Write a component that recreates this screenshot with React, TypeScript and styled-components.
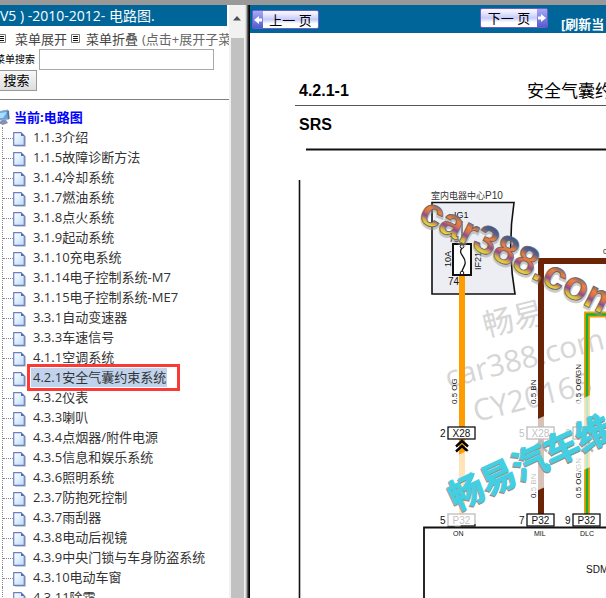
import React from "react";
import styled, { createGlobalStyle } from "styled-components";

const GlobalStyle = createGlobalStyle`
  * { box-sizing: border-box; }
  body { margin: 0; background: #fff; overflow: hidden; }
  button, input { font-family: inherit; }
`;

const ui = `"Open Sans", "Noto Sans CJK SC", sans-serif`;
const sim = `"Liberation Sans", "Noto Sans CJK SC", sans-serif`;

const Page = styled.div`
  display: flex;
  height: 100vh;
  overflow: hidden;
  border-top: 5px solid #999;
  font: 13px/20px ${ui};
  color: #333;
`;

const Sidebar = styled.aside`
  flex: 0 0 229px;
  overflow: hidden;
  white-space: nowrap;
`;

const SideTitle = styled.h1`
  margin: 0 2px 0 0;
  height: 21px;
  background: #069;
  color: #fff;
  font-size: 14px;
  font-weight: 400;
  line-height: 22px;
`;

const Tools = styled.div`
  display: flex;
  align-items: center;
  height: 23px;
  margin: 1px 0 0 -3px;
  color: #666;
`;

const ToolLink = styled.a`
  display: flex;
  align-items: center;
  gap: 9px;
  margin-right: 4px;
  color: #444;
  text-decoration: none;

  & + & { gap: 6px; }
`;

const SearchForm = styled.form`
  margin: 0;
  padding-bottom: 8px;
  border-bottom: 1px solid #808080;
`;

const SearchRow = styled.div`
  display: flex;
  align-items: center;
  gap: 4px;
  margin: -1px 0 0 -5px;
`;

const SearchLabel = styled.label`
  color: #000;
  font: 10px/20px ${sim};
`;

const SearchInput = styled.input`
  width: 175px;
  height: 21px;
  padding: 1px;
  border: 1px solid #a9a9a9;
`;

const SearchButton = styled.button`
  display: block;
  width: 42px;
  height: 21px;
  margin-left: -5px;
  padding: 0 0 1px 1px;
  border: 1px solid #999;
  background: linear-gradient(#f8f8f8, #ddd);
  color: #000;
  font-size: 13px;
  line-height: 18px;
`;

const TreeRoot = styled.a`
  display: flex;
  align-items: center;
  gap: 4px;
  height: 20px;
  margin: 7px 0 0 -6px;
  color: #00f;
  font-weight: 700;
  text-decoration: none;
`;

const Tree = styled.ul`
  margin: 0;
  padding: 0 0 0 2px;
  list-style: none;
`;

const Node = styled.li`
  display: flex;
  height: 20px;
  align-items: center;
  border-left: 1px dotted #888;
`;

const Branch = styled.span`
  width: 10px;
  height: 3px;
  border-bottom: 1px dotted #888;
`;

const NodeLink = styled.a<{ $selected?: boolean }>`
  position: relative;
  margin-left: 5px;
  padding: 0 1px 0 2px;
  line-height: 19px;
  color: #333;
  text-decoration: none;
  background: ${(p) => (p.$selected ? "#c0d2ec" : "transparent")};
`;

const Highlight = styled.span`
  position: absolute;
  inset: -4px -13px -4px -4px;
  border: 3px solid #fb3a36;
`;

const Scroll = styled.div`
  flex: 0 0 16px;
  display: flex;
  flex-direction: column;
  align-items: center;
  background: #f1f1f1;
`;

const ScrollUp = styled.button`
  width: 16px;
  height: 33px;
  padding: 6px 0 0 4px;
  border: 0;
  background: none;
  line-height: 0;
  text-align: left;
`;

const ScrollArrow = styled.svg`
  display: block;
  margin-bottom: 12px;
`;

const Thumb = styled.div`
  flex: 1;
  width: 13px;
  background: #c1c1c1;
`;

const Divider = styled.div`
  flex: 0 0 5px;
  background: linear-gradient(90deg, #ddd 1px, #777 2px, #444 3px, #000 4px);
`;

const Main = styled.main`
  flex: 1;
  min-width: 0;
  display: flex;
  flex-direction: column;
  overflow: hidden;
`;

const Bar = styled.nav`
  flex: 0 0 28px;
  display: flex;
  align-items: flex-start;
  overflow: hidden;
  background: #069;
  white-space: nowrap;
`;

const PageButton = styled.button<{ $next?: boolean }>`
  display: flex;
  flex: none;
  flex-direction: ${(p) => (p.$next ? "row-reverse" : "row")};
  align-items: stretch;
  width: ${(p) => (p.$next ? "68px" : "67px")};
  height: ${(p) => (p.$next ? "20px" : "19px")};
  margin: ${(p) => (p.$next ? "3px 0 0 161px" : "5px 0 0 2px")};
  padding: 0;
  border: 1px solid #6a60c8;
  border-radius: 2px;
  background: linear-gradient(#f4f4ff 10%, #c6cafa 50%, #fff 75%);
  color: #000;
  font: 13px/19px ${sim};
`;

const ButtonText = styled.span`
  flex: 1;
  text-align: center;
`;

const ArrowTile = styled.span`
  width: 10px;
  display: flex;
  align-items: center;
  background: linear-gradient(#a5abf2, #545bd0);
`;

const Refresh = styled.a`
  margin: 9px 0 0 13px;
  color: #fff;
  font-size: 13px;
  font-weight: 700;
  text-decoration: none;
`;

const DocHead = styled.header`
  display: flex;
  justify-content: space-between;
  align-items: flex-end;
  margin: 45px 0 0 45px;
  padding: 0 0 1px 4px;
  border-bottom: 1px solid #555;
  white-space: nowrap;
  overflow: hidden;
  color: #000;
  font: 700 16px/26px ${sim};
`;

const DocTitle = styled.span`
  margin-right: -6px;
  padding-top: 2px;
  font-size: 17px;
  font-weight: 400;
  line-height: 24px;
`;

const Section = styled.h2`
  margin: 6px 0 0 49px;
  color: #000;
  font: 700 16px/26px ${sim};
`;

const Canvas = styled.svg`
  display: block;
  flex: 1;
  width: 100%;
  min-height: 0;
  margin-top: 3px;
  font-family: ${sim};
`;

const items = [
  "1.1.3介绍", "1.1.5故障诊断方法", "3.1.4冷却系统", "3.1.7燃油系统", "3.1.8点火系统",
  "3.1.9起动系统", "3.1.10充电系统", "3.1.14电子控制系统-M7", "3.1.15电子控制系统-ME7",
  "3.3.1自动变速器", "3.3.3车速信号", "4.1.1空调系统", "4.2.1安全气囊约束系统", "4.3.2仪表",
  "4.3.3喇叭", "4.3.4点烟器/附件电源", "4.3.5信息和娱乐系统", "4.3.6照明系统", "2.3.7防抱死控制",
  "4.3.7雨刮器", "4.3.8电动后视镜", "4.3.9中央门锁与车身防盗系统", "4.3.10电动车窗", "4.3.11除霜",
];
const selected = "4.2.1安全气囊约束系统";

const Sheet = styled.svg`
  flex: none;
  margin-top: 3px;
`;

const FileIcon = () => (
  <Sheet width="13" height="16" viewBox="0 0 13 16">
    <path d="M2 15.3H12.5V5" fill="none" stroke="#c4c4c8" />
    <path d="M.7 1.7H8L11.3 5V14.3H.7Z" fill="url(#paper)" stroke="#6a80bd" strokeWidth="1.2" />
    <path d="M8 1.5V5H11.500Z" fill="#506dba" />
    <defs>
      <linearGradient id="paper" x2="1" y2="1">
        <stop stopColor="#fff" />
        <stop offset="1" stopColor="#bcdcff" />
      </linearGradient>
    </defs>
  </Sheet>
);

const ComputerIcon = () => (
  <svg width="16" height="17" viewBox="0 0 16 17">
    <path d="M3 3 14 1 15 10 5 11Z" fill="#5aa9ee" stroke="#93a3bd" />
    <path d="M5 4 13 3 9 9H5Z" fill="#a9defd" />
    <path d="M8 11H12L14 14 9 16 4 14Z" fill="#8890ac" />
    <path d="M13 2 15 2 15.5 10 14 10Z" fill="#666e91" />
  </svg>
);

const MenuIcon = () => (
  <svg width="9" height="9" viewBox="0 0 9 9">
    <path d="M.5.5H8.5V8.5H.5Z" fill="#fff" stroke="#777" />
    <path d="M2 2.5H7M2 4.5H7M2 6.5H7" stroke="#111" />
  </svg>
);

const Arrow = ({ next }: { next?: boolean }) => (
  <ArrowTile>
    <svg width="10" height="10" viewBox="0 0 10 10">
      <path d={next ? "M1 3.5H4V1L9 5 4 9V6.500H1Z" : "M9 3.5H6V1L1 5 6 9V6.500H9Z"} fill="#fff" />
    </svg>
  </ArrowTile>
);

const Pin = ({ x, y, n, label }: { x: number; y: number; n: string; label: string }) => (
  <g>
    <rect x={x} y={y} width="27" height="12" fill="#fff" stroke="#111" strokeWidth="1.3" />
    <text x={x + 13.5} y={y + 9.7} fontSize="10" textAnchor="middle">{label}</text>
    <text x={x - 8} y={y + 10} fontSize="10">{n}</text>
  </g>
);

const WireLabel = ({ x, y, children, size = 8 }: { x: number; y: number; children: string; size?: number }) => (
  <text transform={`translate(${x} ${y}) rotate(-90)`} fontSize={size}>{children}</text>
);

const Chevron = ({ x }: { x: number }) => (
  <path d={`M${x - 6} 446.5 ${x} 441 ${x + 6} 446.5M${x - 6} 451.5 ${x} 446 ${x + 6} 451.5`} fill="none" stroke="#000" strokeWidth="2.4" />
);

const Diagram = () => (
  <Canvas role="img" aria-label="SRS">
    <defs>
      <linearGradient id="rainbow" gradientUnits="userSpaceOnUse" x1="0" y1="-29" x2="0" y2="1">
        <stop stopColor="#34549a" />
        <stop offset=".2" stopColor="#5a5f86" />
        <stop offset=".4" stopColor="#f0803c" />
        <stop offset=".56" stopColor="#d9704c" />
        <stop offset=".7" stopColor="#8b4a98" />
        <stop offset=".84" stopColor="#d9b040" />
        <stop offset="1" stopColor="#f4ec3c" />
      </linearGradient>
    </defs>
    <g transform="translate(-250 -141)" fill="#111">
      <path d="M306 149.500H3000" stroke="#111" strokeWidth="2" />
      <path d="M299.500 180V3000" stroke="#111" strokeWidth="1.600" />
      <text x="431" y="198.500" fontSize="9" fill="#333">室内电器中心<tspan fontSize="10">P10</tspan></text>
      <path d="M432 202.500H514Q507 248 515 294H432Z" fill="#edeef4" stroke="#111" strokeWidth="1.600" />

      <g fill="#d6d6d6" fontFamily={ui}>
        <text transform="translate(486 337) rotate(-14)" fontSize="31">畅易</text>
        <text transform="translate(448 388) rotate(-14)" fontSize="30">car388.com</text>
        <text transform="translate(476 422) rotate(-14)" fontSize="30">CY20165</text>
      </g>

      <path d="M462 276V520" stroke="#ff9d00" strokeWidth="6" />
      <path d="M541 520V261H3000" fill="none" stroke="#6b2506" strokeWidth="6" />
      <path d="M587 520V314.500H3000" fill="none" stroke="#ff9a00" strokeWidth="6" />
      <path d="M587 520V314.500H3000" fill="none" stroke="#0cb43c" strokeWidth="2.600" />

      <text x="454" y="218" fontSize="9">IG1</text>
      <text x="449" y="242" fontSize="9">75</text>
      <path d="M462 221V246" stroke="#222" />
      <rect x="453" y="244" width="18" height="31" fill="#fff" stroke="#111" strokeWidth="2" />
      <path d="M462 248C457 254 467 257 465 264 464 268 462 269 462 272" fill="none" stroke="#111" strokeWidth="1.300" />
      <circle cx="462" cy="246.500" r="1.800" fill="#fff" stroke="#111" />
      <circle cx="462" cy="273" r="1.800" fill="#fff" stroke="#111" />
      <WireLabel x={451} y={267} size={9}>10A</WireLabel>
      <WireLabel x={481} y={270} size={9}>IF21</WireLabel>
      <text x="448" y="285" fontSize="10">74</text>

      <Pin x={448} y={427} n="2" label="X28" />
      <Pin x={527} y={427} n="5" label="X28" />
      <Pin x={573} y={427} n="6" label="X28" />
      <Chevron x={462} />
      <Chevron x={541} />
      <Chevron x={587} />
      <Pin x={448} y={514} n="5" label="P32" />
      <Pin x={527} y={514} n="7" label="P32" />
      <Pin x={573} y={514} n="9" label="P32" />
      <WireLabel x={457} y={404}>0.5 OG</WireLabel>
      <WireLabel x={536} y={404}>0.5 BN</WireLabel>
      <WireLabel x={581} y={404}>0.5 OG/GN</WireLabel>
      <WireLabel x={536} y={498}>0.5 BN</WireLabel>
      <WireLabel x={581} y={498}>0.5 OG/GN</WireLabel>
      <text x="603" y="254" fontSize="8">0</text>

      <path d="M447 460 606 388V460L570 476 534 492 480 517 478 524H462L458 529 454 526H447Z" fill="#fff" opacity=".72" />
      <path d="M424 3000V527.500H3000" fill="none" stroke="#111" strokeWidth="1.800" />
      <text x="453" y="536" fontSize="7">ON</text>
      <text x="534" y="536" fontSize="7">MIL</text>
      <text x="580" y="536" fontSize="7">DLC</text>
      <text x="586" y="573" fontSize="10">SDM</text>

      <g transform="translate(417 220) rotate(27)" fontSize="40" fontWeight="700">
        <text x="1" y="2" fill="#888" stroke="#999" strokeWidth="2" opacity=".5" aria-hidden="true">car388.com</text>
        <text fill="url(#rainbow)" stroke="#6b6560" strokeWidth=".8">car388.com</text>
      </g>
      <g transform="translate(456 511) rotate(-25)" fontSize="35" fontWeight="700">
        <text x="-1" y="1" fill="#9a8c86" stroke="#9a8c86" strokeWidth="1" aria-hidden="true">畅易汽车维</text>
        <text fill="#43cfe2" stroke="#43cfe2" strokeWidth=".8">畅易汽车维</text>
      </g>
    </g>
  </Canvas>
);

export default function App() {
  return (
    <>
      <GlobalStyle />
      <Page>
        <Sidebar>
          <SideTitle>V5 ) -2010-2012- 电路图.</SideTitle>
          <Tools>
            <ToolLink href="#expand"><MenuIcon />菜单展开</ToolLink>
            <ToolLink href="#collapse"><MenuIcon />菜单折叠</ToolLink>
            (点击+展开子菜
          </Tools>
          <SearchForm>
            <SearchRow>
              <SearchLabel htmlFor="menu-search">菜单搜索</SearchLabel>
              <SearchInput id="menu-search" type="text" />
            </SearchRow>
            <SearchButton type="button">搜索</SearchButton>
          </SearchForm>
          <TreeRoot href="#root"><ComputerIcon />当前:电路图</TreeRoot>
          <Tree>
            {items.map((item) => (
              <Node key={item}>
                <Branch />
                <FileIcon />
                <NodeLink href="#node" $selected={item === selected}>
                  {item}
                  {item === selected && <Highlight />}
                </NodeLink>
              </Node>
            ))}
          </Tree>
        </Sidebar>
        <Scroll>
          <ScrollUp type="button" aria-label="向上滚动">
            <ScrollArrow width="8" height="5" viewBox="0 0 8 5"><path d="M4 0 8 4.500H0Z" fill="#505050" /></ScrollArrow>
          </ScrollUp>
          <Thumb />
        </Scroll>
        <Divider />
        <Main>
          <Bar>
            <PageButton type="button"><Arrow /><ButtonText>上一 页</ButtonText></PageButton>
            <PageButton type="button" $next><Arrow next /><ButtonText>下一 页</ButtonText></PageButton>
            <Refresh href="#refresh">[刷新当</Refresh>
          </Bar>
          <DocHead>
            <span>4.2.1-1</span>
            <DocTitle>安全气囊约</DocTitle>
          </DocHead>
          <Section>SRS</Section>
          <Diagram />
        </Main>
      </Page>
    </>
  );
}
